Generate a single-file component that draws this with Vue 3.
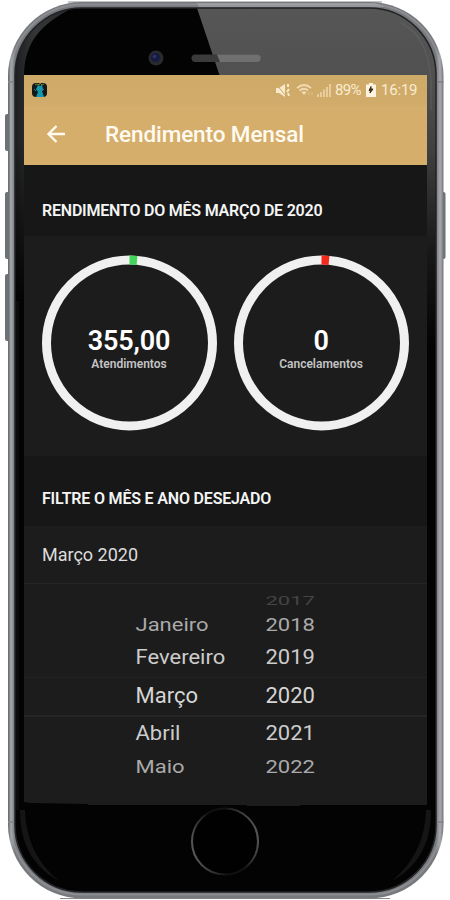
<template>
  <div class="phone">
    <svg class="shell" viewBox="0 0 450 900" width="450" height="900">
      <defs>
        <linearGradient id="rim" x1="0" x2="1" y1="0" y2="0">
          <stop offset="0" stop-color="#63666a" />
          <stop offset="0.007" stop-color="#a0a3a6" />
          <stop offset="0.016" stop-color="#77797c" />
          <stop offset="0.5" stop-color="#77797e" />
          <stop offset="0.983" stop-color="#77797c" />
          <stop offset="0.992" stop-color="#a5a6ab" />
          <stop offset="1" stop-color="#77787c" />
        </linearGradient>
        <linearGradient id="glare" x1="0" x2="0" y1="0" y2="1">
          <stop offset="0" stop-color="#565656" />
          <stop offset="0.22" stop-color="#505050" />
          <stop offset="0.42" stop-color="#404040" />
          <stop offset="0.72" stop-color="#181818" />
          <stop offset="1" stop-color="#040404" />
        </linearGradient>
        <linearGradient id="edge" x1="0" x2="1" y1="0" y2="0">
          <stop offset="0" stop-color="#1d1e1f" />
          <stop offset="0.35" stop-color="#333536" />
          <stop offset="1" stop-color="#2a2a2b" />
        </linearGradient>
        <linearGradient id="fade" x1="0" x2="0" y1="0" y2="1">
          <stop offset="0" stop-color="#030303" stop-opacity="0" />
          <stop offset="1" stop-color="#030303" />
        </linearGradient>
        <linearGradient id="ring" x1="0" x2="1" y1="0.7" y2="0.4">
          <stop offset="0" stop-color="#606060" />
          <stop offset="0.4" stop-color="#101010" />
          <stop offset="0.65" stop-color="#121212" />
          <stop offset="1" stop-color="#555" />
        </linearGradient>
        <clipPath id="face">
          <rect x="15" y="8" width="421" height="884" rx="67" />
        </clipPath>
      </defs>
      <g fill="#6d7275">
        <rect x="5" y="114" width="6" height="37" rx="2" />
        <rect x="5" y="192" width="6" height="67" rx="2" />
        <rect x="5" y="274" width="6" height="67" rx="2" />
        <rect x="440" y="192" width="5.500" height="67" rx="2" />
      </g>
      <path d="M68 2H382M60 898.500H390" stroke="#88898d" stroke-width="1" />
      <rect x="8" y="2" width="435.500" height="896.500" rx="74" fill="url(#rim)" />
      <rect x="11" y="4.500" width="429.500" height="890" rx="71" fill="none" stroke="#aaacb1" stroke-opacity="0.4" stroke-width="2" />
      <path d="M197 3H375L385 7H199Z" fill="#b0b0b4" fill-opacity="0.5" />
      <path d="M8 82h7M8 822h7M436.500 82h7M436.500 822h7" stroke="#85878b" stroke-width="2" />
      <g clip-path="url(#face)">
        <rect x="15" y="8" width="421" height="884" fill="#030303" />
        <path d="M15 75C15 35 40 12 72 8C40 25 25 42 24 75V300H15Z" fill="url(#edge)" />
        <rect x="15" y="140" width="9" height="161" fill="url(#fade)" />
        <rect x="15" y="301" width="4" height="509" fill="#0c0d0e" />
        <path d="M197 8H436V345H310Z" fill="url(#glare)" />
        <path d="M401 23C421 33 429 52 431 82V110" fill="none" stroke="#777" stroke-opacity="0.25" stroke-width="1.500" />
        <path d="M20 810C20 848 36 868 59 881C38 863 26 841 25 810Z" fill="#151515" />
        <path d="M431 810C431 848 415 868 392 881C413 863 425 841 426 810Z" fill="#151515" />
      </g>
      <rect x="15" y="8" width="421" height="884" rx="67" fill="none" stroke="#222326" stroke-width="1.500" />
      <circle cx="156" cy="58" r="7.500" fill="#292a2e" />
      <circle cx="155.500" cy="57.500" r="4.500" fill="#171b40" />
      <circle cx="154.500" cy="56.500" r="1.800" fill="#2b3566" />
      <rect x="191.500" y="54.500" width="69" height="7.500" rx="3.700" fill="#3b3b3b" />
      <path d="M217 54.500H257a3.700 3.700 0 0 1 0 7.500H220Z" fill="#707070" />
      <circle cx="225" cy="841.500" r="33" fill="#010101" stroke="url(#ring)" stroke-width="2" />
    </svg>

    <main class="screen">
      <header>
        <div class="status">
          <svg class="app-icon" width="15" height="16" viewBox="0 0 15 16">
            <rect y="1" width="15" height="14" rx="4" fill="#11191a" />
            <path d="M6 3l2 1 2-1 1 4-1 2 2 6H4l2-5-2-3z" fill="#1698ac" />
            <path d="M3 3l2-1 2 1 1-2 2 2 2-1" fill="none" stroke="#7c842f" />
            <path d="M2 7l2 2M12 7l-2 2" stroke="#397e86" />
          </svg>
          <div class="status-right">
            <svg width="16" height="15" viewBox="0 0 16 15">
              <path d="M1 5h3l6-4v13L4 10H1z" fill="#f8e9cd" />
              <path d="M1 1l10 12" stroke="#d0aa69" stroke-width="1" />
              <path d="M13 1v3M14 6l-2 3M13 10l1 3" fill="none" stroke="#f8e9cd" stroke-width="2" />
            </svg>
            <svg class="wifi" width="17" height="15" viewBox="0 0 17 15">
              <path d="M1 5Q8 -1 15 5M3.500 7.500Q8 4 12 7.500" fill="none" stroke="#f1dab3" stroke-width="1.800" />
              <path d="M5.500 9.500Q8 7 10.500 9.500L8 12z" fill="#f1dab3" />
              <path d="M13 9v3M16 9v3" stroke="#e0c18d" stroke-width="1" />
            </svg>
            <svg class="signal" width="15" height="15" viewBox="0 0 15 15">
              <path d="M2 11v3M5 9v5M8 6.500v7.500M11 4v10M14 1v13" stroke="#e9cb9c" stroke-width="2" />
            </svg>
            <span class="percent">89%</span>
            <svg class="battery" width="10" height="14" viewBox="0 0 10 14">
              <path d="M3 0h4v1.500h3V14H0V1.500h3z" fill="#fff3df" />
              <path d="M5 3.500L3 7.500h1.500L4 10l3-4H5z" fill="#37301f" stroke="#37301f" />
            </svg>
            <span class="clock">16:19</span>
          </div>
        </div>
        <div class="toolbar">
          <svg width="20" height="20" viewBox="0 0 20 20">
            <path d="M19 10H2.500M10.500 2L2.500 10L10.500 18" fill="none" stroke="#fffaf0" stroke-width="2.400" />
          </svg>
          <h1>Rendimento Mensal</h1>
        </div>
      </header>

      <h2><span>RENDIMENTO DO MÊS MARÇO DE 2020</span></h2>
      <section class="charts">
        <div v-for="chart in charts" :key="chart.label" class="chart">
          <svg width="176" height="176" viewBox="0 0 176 176">
            <circle cx="88.500" cy="88" r="83" fill="none" stroke="#f0f0f0" stroke-width="9" />
            <path d="M88.500 5A83 83 0 0 1 96 5.400" fill="none" :stroke="chart.color" stroke-width="9" />
          </svg>
          <div class="chart-text">
            <strong>{{ chart.value }}</strong>
            <span>{{ chart.label }}</span>
          </div>
        </div>
      </section>

      <h2 class="filter-title"><span>FILTRE O MÊS E ANO DESEJADO</span></h2>
      <div class="selected-date">Março 2020</div>
      <section class="picker">
        <div v-for="row in rows" :key="row.year" class="picker-row" :class="row.style">
          <span class="month">{{ row.month }}</span>
          <span class="year">{{ row.year }}</span>
        </div>
      </section>
    </main>
  </div>
</template>

<script setup>
const charts = [
  { value: '355,00', label: 'Atendimentos', color: '#43d45b' },
  { value: '0', label: 'Cancelamentos', color: '#f3291e' }
]

const rows = [
  { month: '', year: '2017', style: 'edge' },
  { month: 'Janeiro', year: '2018', style: 'far' },
  { month: 'Fevereiro', year: '2019', style: 'near' },
  { month: 'Março', year: '2020', style: 'current' },
  { month: 'Abril', year: '2021', style: 'near' },
  { month: 'Maio', year: '2022', style: 'far' }
]
</script>

<style>
body {
  margin: 0;
  background: #fff;
}
</style>

<style scoped>
.phone {
  position: relative;
  width: 450px;
  height: 900px;
  padding: 75px 23px 0 24px;
  box-sizing: border-box;
  overflow: hidden;
  font-family: Roboto, "Liberation Sans", sans-serif;
}

.shell {
  position: absolute;
  left: 0;
  top: 0;
}

.screen {
  position: relative;
  height: 731px;
  background: #1c1c1c;
  color: #f5f5f5;
  overflow: hidden;
  clip-path: polygon(0 0, 100% 0, 100% 730px, 276px 730px, 276px 731px, 223px 731px, 223px 730px, 64px 730px, 64px 729px, 7px 728px, 0 727px);
}

header {
  height: 90px;
  background: linear-gradient(#ceaa69, #d0ab6a 28px, #d5ae6b 33px);
}

.status {
  display: flex;
  justify-content: space-between;
  align-items: center;
  height: 30px;
  padding: 0 9px 0 8px;
}

.status-right {
  display: flex;
  align-items: center;
  color: #fbebd0;
  font-size: 15px;
}

.wifi {
  margin-left: 5px;
}

.signal {
  margin-left: 3px;
}

.percent {
  width: 28px;
  margin-left: 4px;
  letter-spacing: -0.7px;
}

.battery {
  margin: 0 5px 0 3px;
}

.clock {
  width: 37px;
  letter-spacing: -0.2px;
}

.toolbar {
  display: flex;
  align-items: center;
  height: 58px;
  padding-left: 22px;
}

h1 {
  margin: 0 0 0 39px;
  color: #fffaf0;
  font-size: 22.5px;
  font-weight: 500;
  line-height: 30px;
  letter-spacing: -0.1px;
  white-space: nowrap;
}

h2 {
  display: flex;
  align-items: center;
  height: 71px;
  margin: 0;
  padding: 19px 18px 0;
  box-sizing: border-box;
  background: #171717;
  font-size: 16px;
  font-weight: 600;
  letter-spacing: -0.21px;
  white-space: nowrap;
}

.charts {
  display: flex;
  gap: 16px;
  height: 220px;
  padding: 19px 17px 0;
  box-sizing: border-box;
}

.chart {
  display: grid;
  width: 176px;
  height: 176px;
}

.chart > * {
  grid-area: 1 / 1;
}

.chart-text {
  display: flex;
  flex-direction: column;
  align-items: center;
  padding-top: 70px;
}

.chart-text strong {
  font-size: 27px;
  font-weight: 600;
  line-height: 32px;
  letter-spacing: -0.2px;
  color: #fff;
}

.chart-text span {
  color: #c4c4c4;
  font-size: 12px;
  font-weight: 600;
  line-height: 15px;
}

.filter-title {
  height: 70px;
  padding-top: 15px;
  letter-spacing: -0.18px;
}

.selected-date {
  height: 58px;
  padding-left: 18px;
  box-sizing: border-box;
  border-bottom: 1px solid #252525;
  color: #ddd;
  font-size: 18px;
  line-height: 58px;
}

.picker {
  padding-top: 9px;
}

.picker-row {
  display: flex;
  align-items: center;
  padding-left: 111.5px;
  box-sizing: border-box;
  color: #ccc;
  font-size: 22px;
}

.picker-row span {
  display: block;
}

.month {
  width: 130px;
}

.edge {
  height: 15px;
  color: #444;
  overflow: hidden;
}

.edge span {
  transform: scaleY(0.6);
}

.far {
  height: 33px;
  color: #aaa;
}

.far span {
  transform: scaleY(0.8);
}

.near {
  height: 33px;
  padding-bottom: 2px;
}

.near span {
  transform: scaleY(0.96);
}

.current {
  height: 40px;
  margin-top: 3px;
  padding-bottom: 2px;
  border-top: 1px solid #222;
  border-bottom: 2px solid #262626;
  color: #d5d5d5;
}
</style>
